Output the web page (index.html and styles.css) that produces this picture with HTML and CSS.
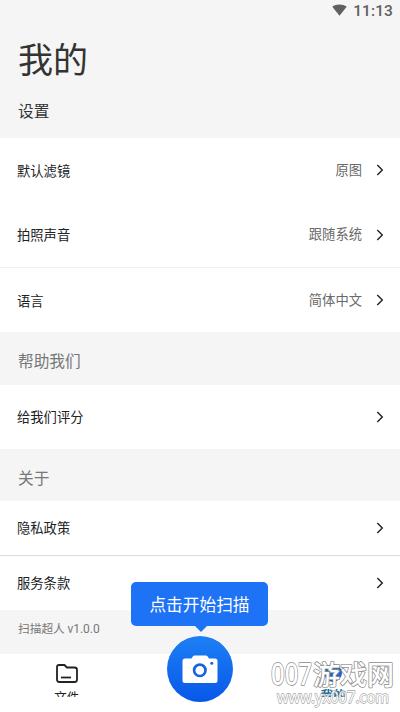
FILE: index.html
```html
<!DOCTYPE html>
<html lang="zh-CN">
<head>
<meta charset="utf-8">
<title>我的</title>
<link rel="stylesheet" href="styles.css">
</head>
<body>
<main class="screen">
  <header class="header">
    <div class="status">
      <svg class="wifi" viewBox="0 0 15 12"><path d="M0.300 2.800C4-.4 11-.4 14.700 2.800L7.500 11.800Z"/></svg>
      <span class="clock">11:13</span>
    </div>
    <h1 class="title">我的</h1>
    <h2 class="subtitle">设置</h2>
  </header>
  <section class="group">
    <div class="row"><span class="label">默认滤镜</span><span class="value">原图</span><svg class="chevron" viewBox="0 0 8 12"><path d="M1.300 1L6.300 6L1.300 11"/></svg></div>
    <div class="row"><span class="label">拍照声音</span><span class="value">跟随系统</span><svg class="chevron" viewBox="0 0 8 12"><path d="M1.300 1L6.300 6L1.300 11"/></svg></div>
    <div class="row row-light-line"><span class="label">语言</span><span class="value">简体中文</span><svg class="chevron" viewBox="0 0 8 12"><path d="M1.300 1L6.300 6L1.300 11"/></svg></div>
  </section>
  <h2 class="section-title help">帮助我们</h2>
  <section class="group">
    <div class="row row-rate"><span class="label">给我们评分</span><svg class="chevron" viewBox="0 0 8 12"><path d="M1.300 1L6.300 6L1.300 11"/></svg></div>
  </section>
  <h2 class="section-title about">关于</h2>
  <section class="group">
    <div class="row row-short"><span class="label">隐私政策</span><svg class="chevron" viewBox="0 0 8 12"><path d="M1.300 1L6.300 6L1.300 11"/></svg></div>
    <div class="row row-short row-line"><span class="label">服务条款</span><svg class="chevron" viewBox="0 0 8 12"><path d="M1.300 1L6.300 6L1.300 11"/></svg></div>
  </section>
  <p class="version">扫描超人 <span class="version-number">v1.0.0</span></p>
  <nav class="tabs">
    <div class="tab">
      <svg class="folder" viewBox="0 0 22 19"><path d="M3 1H8.400L11 3.500H18.600Q21 3.500 21 6V15.500Q21 18 18.600 18H3.400Q1 18 1 15.500V3Q1 1 3 1Z"/><path d="M5 13.500H15"/></svg>
      <span class="tab-label">文件</span>
    </div>
    <div class="tab"></div>
    <div class="tab tab-active">
      <svg class="person" viewBox="0 0 20 19"><circle cx="10" cy="9" r="9"/></svg>
      <span class="tab-label">我的</span>
    </div>
  </nav>
  <div class="tooltip">点击开始扫描</div>
  <div class="scan">
    <svg class="camera" viewBox="0 0 36 29"><path class="camera-body" d="M3 3.500H9.500L11 1.200Q11.500.500 12.500.500H24Q25 .500 25.500 1.200L27 3.500H33Q35.500 3.500 35.500 6V25.500Q35.500 28 33 28H3Q.500 28 .500 25.500V6Q.500 3.500 3 3.500Z"/><circle class="lens" cx="17.800" cy="15.300" r="5.700"/><circle class="flash" cx="29.800" cy="8.200" r="1.500"/></svg>
  </div>
  <svg class="watermark" viewBox="0 0 140 56">
    <text class="mark-name" y="28.500"><tspan class="mark-digits" x="11" textLength="41" lengthAdjust="spacingAndGlyphs">007</tspan><tspan x="53">游戏网</tspan></text>
    <text class="mark-url" x="17" y="47" textLength="112" lengthAdjust="spacingAndGlyphs">www.yx007.com</text>
  </svg>
</main>
</body>
</html>
```

FILE: styles.css
```css
* { box-sizing: border-box; }
body {
  margin: 0;
  background: #fff;
  color: #202124;
  font-family: "Noto Sans CJK SC", sans-serif;
}
h1, h2, p { margin: 0; font-weight: 400; }
.screen {
  position: relative;
  width: 400px;
  height: 712px;
  overflow: hidden;
  background: #fff;
}
.header { height: 138px; background: #f5f5f5; }
.status {
  display: flex;
  justify-content: flex-end;
  height: 22px;
  padding: 0 7px 0 0;
  color: #606060;
}
.wifi { width: 15px; height: 12px; margin: 4px 6px 0 0; fill: #606060; }
.clock {
  font: 500 15.500px/22px Roboto, sans-serif;
  letter-spacing: 0.100px;
}
.title {
  padding-left: 18px;
  font-size: 35px;
  line-height: 50px;
  margin-top: 11px;
  color: #333;
}
.subtitle {
  margin-top: 16px;
  padding-left: 18px;
  font-size: 15.700px;
  line-height: 24px;
  color: #333;
}
.group { background: #fff; }
.row {
  display: flex;
  align-items: center;
  height: 64.667px;
  padding: 0 16px 0 17px;
  font-size: 13.300px;
}
.row-light-line { border-top: 1px solid #f1f1f1; }
.row-rate { height: 64px; }
.row-short { height: 54px; }
.row-line { height: 55px; border-top: 1px solid #dcdcdc; }
.label { flex: 1; }
.value { margin: 0 14px 2px 0; color: #6a6a6a; }
.chevron {
  width: 8px;
  height: 12px;
  fill: none;
  stroke: #222;
  stroke-width: 1.400;
}
.section-title {
  padding-left: 18px;
  background: #f5f5f5;
  color: #777;
  font-size: 15.700px;
}
.help { height: 53px; line-height: 57px; }
.about { height: 52px; line-height: 57px; }
.version {
  height: 44px;
  padding-left: 18px;
  background: #f5f5f5;
  color: #777;
  font-size: 11.700px;
  line-height: 36px;
}
.version-number { font-family: Roboto, sans-serif; font-size: 12px; }
.tabs { display: flex; height: 43px; background: #fff; overflow: hidden; }
.tab {
  display: flex;
  flex: 1;
  flex-direction: column;
  align-items: center;
  padding-top: 10px;
  color: #222;
}
.tab-label { font-size: 12.500px; line-height: 18px; margin-top: 5px; }
.folder { width: 22px; height: 19px; fill: none; stroke: #222; stroke-width: 1.800; flex: none; }
.person { width: 20px; height: 19px; fill: #176ad6; flex: none; }
.tab-active { color: #176a9a; }
.tab-active .tab-label { font-weight: 700; margin-top: 3px; }
.tooltip {
  position: absolute;
  left: 131px;
  top: 582px;
  width: 137px;
  height: 44px;
  border-radius: 5px;
  background: #1d72f5;
  color: #fff;
  font-size: 16.700px;
  line-height: 45px;
  text-align: center;
}
.tooltip::after {
  content: "";
  position: absolute;
  top: 43px;
  left: 63px;
  border: 7px solid transparent;
  border-top-color: #1d72f5;
  border-bottom: 0;
}
.scan {
  position: absolute;
  left: 167px;
  top: 636px;
  display: flex;
  align-items: center;
  justify-content: center;
  width: 66px;
  height: 66px;
  border-radius: 50%;
  background: linear-gradient(#1e80f4, #0757e8);
}
.camera { width: 36px; height: 29px; }
.camera-body { fill: #fff; }
.lens { fill: none; stroke: #1763dc; stroke-width: 2.700; }
.flash { fill: #1763dc; }
.watermark {
  position: absolute;
  left: 260px;
  top: 656px;
  width: 140px;
  height: 56px;
}
.watermark text {
  fill: #fff;
  stroke: #8c8c8c;
  paint-order: stroke;
  stroke-linejoin: round;
}
.mark-name { font-family: "Noto Sans CJK SC", sans-serif; font-size: 27px; font-weight: 500; stroke-width: 1.500px; }
.mark-digits { font-family: "Noto Sans", sans-serif; font-size: 31px; }
.mark-url { font-family: "Noto Sans", sans-serif; font-size: 16px; font-weight: 400; stroke-width: 1.300px; opacity: 0.800; }
```
